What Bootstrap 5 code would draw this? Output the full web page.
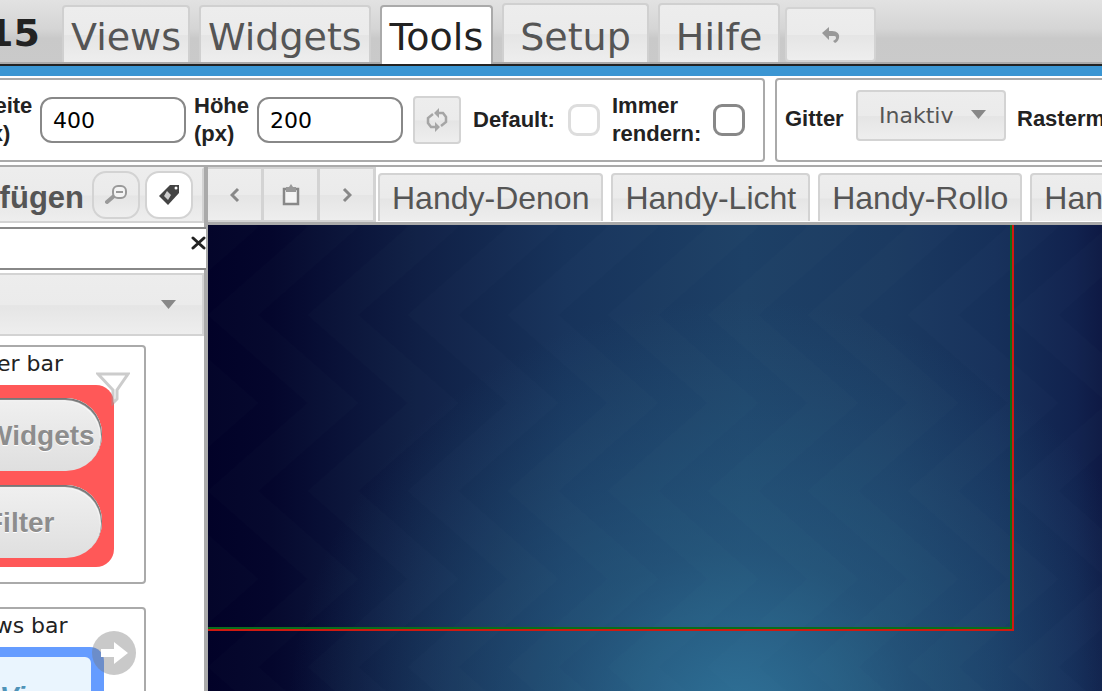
<!DOCTYPE html>
<html lang="de">
<head>
<meta charset="utf-8">
<meta name="viewport" content="width=device-width, initial-scale=1">
<title>Editor</title>
<link href="https://cdn.jsdelivr.net/npm/bootstrap@5.3.0/dist/css/bootstrap.min.css" rel="stylesheet">
<script src="https://cdn.jsdelivr.net/npm/bootstrap@5.3.0/dist/js/bootstrap.bundle.min.js"></script>
<style>
  :root { --face: linear-gradient(#ededed 0, #ebebeb 50%, #e5e5e5 52%, #eee 100%); --edge: #d3d3d3; --rule: #aaa; }
  body { font-family: "DejaVu Sans", Verdana, sans-serif; font-size: 22px; line-height: 28px; color: #222; background: #fff; }
  svg { display: block; }
  .face { background: var(--face); border: 2px solid var(--edge); border-radius: 4px; color: #555; padding: 0; }
  .arial { font-family: "Liberation Sans", Arial, sans-serif; }

  .topbar { height: 64px; background: linear-gradient(#e2e2e2 0, #d5d5d5 45%, #c9c9c9 60%, #cacaca 100%); box-shadow: inset 0 -2px #aaa; font-size: 38px; line-height: 48px; }
  .version { margin-left: -13px; width: 75px; padding-top: 2px; }
  .main-nav { gap: 9px; }
  .main-tab { color: #555; text-decoration: none; background: var(--face); border: 2px solid #d0d0d0; border-bottom: 0; border-radius: 4px 4px 0 0; padding: 6px 7px 1px; margin-bottom: 2px; }
  .main-tab.wide { padding: 8px 16px 1px; }
  .main-tab.active { background: #fff; border-color: var(--rule); color: #222; margin-bottom: 0; padding: 6px 8px 3px; }
  .undo { width: 91px; height: 55px; margin: 0 0 2px -4px; }
  .strip { height: 14px; background: #3b96d3; border-top: 2px solid #222; border-bottom: 2px solid #fff; }

  .tools { gap: 10px; border-bottom: 2px solid var(--rule); padding-bottom: 3px; }
  .group { border: 2px solid var(--rule); border-radius: 4px; height: 84px; font-weight: 700; }
  .group-size { border-left: 0; border-radius: 0 4px 4px 0; margin-left: -30px; width: 795px; }
  .group-grid { padding-left: 8px; }
  .size-label { width: 70px; }
  .size-label + .num + .size-label { width: 71px; padding-left: 8px; }
  .num { width: 146px; height: 46px; border: 2px solid #888; border-radius: 12px; padding: 0 11px; color: #000; background: #fff; font-family: "DejaVu Sans", Verdana, sans-serif; }
  .refresh { width: 48px; height: 48px; margin: 0 12px 0 10px; }
  .default-label { width: 95px; }
  .render-label { width: 113px; padding-left: 12px; }
  .tick { appearance: none; width: 32px; height: 32px; border: 3px solid #888; border-radius: 9px; background: #fff; margin: 0; }
  .tick:disabled { border-color: #ddd; }
  .grid-label { width: 71px; padding-top: 25px; }
  .raster-label { padding-top: 25px; }
  .pick-wrap { margin: 10px 11px 0 0; }
  .pick { appearance: none; width: 150px; height: 51px; padding: 0 21px; font-family: "DejaVu Sans", Verdana, sans-serif; }
  .caret { right: 20px; top: 20px; }

  .side { width: 208px; border-right: 4px solid var(--rule); }
  .side-head { height: 56px; border-width: 2px 2px 2px 0; border-radius: 0; border-top-color: #eee; font-size: 31px; font-weight: 700; gap: 5px; padding-right: 9px; }
  .side-title { padding-top: 6px; margin-right: 3px; }
  .round-btn { width: 48px; height: 48px; border-radius: 14px; }
  .round-btn.active { background: #fff; }
  .search { margin: 4px -2px 3px 0; height: 43px; border: solid #888; border-width: 2px 0; background: #fff; }
  .close-x { padding-top: 7px; }
  .combo { height: 63px; border-left: 0; border-radius: 0; padding-right: 26px; }
  .tile { margin: 9px 0 23px -118px; width: 264px; height: 239px; border: 2px solid var(--rule); border-radius: 4px; padding: 3px 30px 0; }
  .red-bar { margin-top: 7px; height: 182px; border-radius: 18px; background: #ff5858; padding: 13px 12px; gap: 14px; font-size: 28px; }
  .pill-btn { height: 73px; border-radius: 36px; border: 0; background: linear-gradient(#f0f0f0, #dfdfdf); box-shadow: inset -1px 2px 1px #777, inset -2px 3px 1px #fff; color: #8d8d8d; text-shadow: 0 1px #fff; font-weight: 700; padding: 2px 0 0 60px; }
  .blue-bar { margin: 7px 10px 0 0; height: 182px; border-radius: 14px 14px 0 0; background: #659cff; padding: 10px 13px; }
  .blue-inner { height: 100%; border-radius: 6px; background: #eaf5fe; color: #4f93b8; font-size: 28px; padding: 26px 13px; }
  .funnel { right: 14px; top: 25px; }
  .arrow { right: 8px; top: 22px; }

  .step { width: 56px; height: 55px; border-width: 2px 3px 2px 0; border-radius: 0; }
  .views { border-bottom: 3px solid var(--rule); height: 58px; }
  .view-tabs { padding: 0 0 1px 2px; gap: 8px; font-size: 32px; line-height: 36px; }
  .view-tab { border-bottom: 0; border-radius: 4px 4px 0 0; padding: 5px 12px; height: 48px; text-decoration: none; white-space: nowrap; }
  .stage { background:
      radial-gradient(ellipse 50% 90% at 59% 106%, rgba(48,118,156,.9) 0, rgba(44,105,142,.5) 40%, rgba(35,80,120,0) 100%),
      linear-gradient(90deg, #020228 0, #04062c 7%, #102046 24%, #17335b 40%, #1d4066 60%, #1b3a61 76%, #16305a 88%, #11224e 97%, #0e1944 100%); }
  .stage-frame { width: 806px; height: 406px; border: solid #d01a10; border-width: 0 2px 2px 0; }
  .stage-inner { border: solid #0a6e1c; border-width: 0 2px 2px 0; }
</style>
</head>
<body class="vh-100 overflow-hidden d-flex flex-column">

<header class="topbar d-flex align-items-end overflow-hidden flex-shrink-0">
  <strong class="version align-self-center">15</strong>
  <nav class="main-nav d-flex align-items-end">
    <a class="main-tab" href="#">Views</a>
    <a class="main-tab" href="#">Widgets</a>
    <a class="main-tab active" href="#" aria-current="page">Tools</a>
    <a class="main-tab wide" href="#">Setup</a>
    <a class="main-tab wide" href="#">Hilfe</a>
    <button class="face undo d-flex align-items-center justify-content-center" type="button" aria-label="Undo">
      <svg width="18" height="18" viewBox="0 0 18 18"><path d="M0 7 7 1v4h3c5 0 8 3 7 7-1 3-2 4-4 5l-2-2c2-1 3-2 3-3 0-2-1-2-3-2H7v4z" fill="#999"/></svg>
    </button>
  </nav>
</header>
<div class="strip flex-shrink-0"></div>

<section class="tools d-flex overflow-hidden flex-shrink-0">
  <div class="group group-size arial d-flex align-items-center flex-shrink-0">
    <label for="w" class="size-label">Breite<br>(px)</label>
    <input id="w" class="num" type="text" value="400">
    <label for="h" class="size-label">Höhe<br>(px)</label>
    <input id="h" class="num" type="text" value="200">
    <button class="face refresh d-flex align-items-center justify-content-center" type="button" aria-label="Refresh">
      <svg width="22" height="24" viewBox="0 0 22 24" fill="none" stroke="#a5a5a5" stroke-width="2.500"><path d="M7 6 2 10v5l3 4h5M12 5h5l3 4v5l-5 4"/><path d="m13 0-5 5 5 5zM9 14l5 5-5 5z" fill="#a5a5a5" stroke="none"/></svg>
    </button>
    <label for="d" class="default-label">Default:</label>
    <input id="d" class="tick" type="checkbox" disabled>
    <label for="r" class="render-label">Immer<br>rendern:</label>
    <input id="r" class="tick" type="checkbox">
  </div>
  <div class="group group-grid arial d-flex flex-shrink-0">
    <label for="g" class="grid-label">Gitter</label>
    <div class="pick-wrap position-relative">
      <select id="g" class="face pick"><option>Inaktiv</option></select>
      <svg class="caret position-absolute pe-none" width="15" height="9" viewBox="0 0 15 9"><path d="M0 0h15L7.500 9z" fill="#888"/></svg>
    </div>
    <span class="raster-label text-nowrap">Rastermaß</span>
  </div>
</section>

<main class="d-flex flex-grow-1 overflow-hidden">
  <aside class="side flex-shrink-0">
    <div class="face side-head arial d-flex align-items-center justify-content-end">
      <span class="side-title">Hinzufügen</span>
      <button class="face round-btn d-flex align-items-center justify-content-center flex-shrink-0" type="button" aria-label="Suchen">
        <svg width="22" height="20" viewBox="0 0 22 20"><path d="m9 11-7 6" stroke="#999" stroke-width="4" stroke-linecap="round"/><rect x="8" y="1" width="13" height="12" rx="5" fill="#f4f4f4" stroke="#999" stroke-width="2"/><path d="M11 7h7" stroke="#999" stroke-width="2"/></svg>
      </button>
      <button class="face round-btn active d-flex align-items-center justify-content-center flex-shrink-0" type="button" aria-label="Filter">
        <svg width="22" height="22" viewBox="0 0 22 22"><path d="M1 12 12 1h9v8L10 21z" fill="#444"/><path d="m9 7 4 4-3 5-4-4z" fill="#ccc"/><circle cx="18" cy="4" r="1.500" fill="#fff"/></svg>
      </button>
    </div>
    <div class="search d-flex justify-content-end">
      <button class="close-x border-0 bg-transparent px-0 pb-0 align-self-start" type="button" aria-label="Schließen">
        <svg width="15" height="14" viewBox="0 0 15 14"><path d="m2 2 11 10M13 2 2 12" stroke="#222" stroke-width="3" stroke-linecap="round"/></svg>
      </button>
    </div>
    <button class="face combo w-100 d-flex align-items-center justify-content-end" type="button" aria-label="Alle">
      <svg width="15" height="9" viewBox="0 0 15 9"><path d="M0 0h15L7.500 9z" fill="#888"/></svg>
    </button>
    <div class="tile position-relative">
      <div class="text-center">Filter bar</div>
      <div class="red-bar arial d-flex flex-column">
        <button class="pill-btn text-start flex-shrink-0" type="button">Widgets</button>
        <button class="pill-btn text-start flex-shrink-0" type="button">Filter</button>
      </div>
      <svg class="funnel position-absolute" width="34" height="34" viewBox="0 0 34 34"><path d="M2 2h30L21 18v9l-4 4V18z" fill="#fff" fill-opacity=".5" stroke="#999" stroke-opacity=".5" stroke-width="3"/></svg>
    </div>
    <div class="tile position-relative">
      <div class="text-center">Views bar</div>
      <div class="blue-bar arial fw-bold fst-italic text-end"><div class="blue-inner">Views</div></div>
      <svg class="arrow position-absolute" width="44" height="44" viewBox="0 0 44 44"><circle cx="22" cy="22" r="22" fill="#777" fill-opacity=".4"/><path d="M9 18h13v-7l14 11-14 11v-7H9z" fill="#fff"/></svg>
    </div>
  </aside>

  <section class="flex-grow-1 d-flex flex-column overflow-hidden">
    <div class="views d-flex flex-shrink-0">
      <button class="face step d-flex align-items-center justify-content-center flex-shrink-0" type="button" aria-label="Zurück">
        <svg width="10" height="16" viewBox="0 0 10 16"><path d="M8 2 2 8l6 6" fill="none" stroke="#888" stroke-width="3"/></svg>
      </button>
      <button class="face step d-flex align-items-center justify-content-center flex-shrink-0" type="button" aria-label="Liste">
        <svg width="18" height="22" viewBox="0 0 18 22"><path d="M2 5h14v15H2z" fill="#f4f4f4" stroke="#888" stroke-width="2.500"/><path d="M4 3h3l2-3 2 3h3v5H4z" fill="#999"/></svg>
      </button>
      <button class="face step d-flex align-items-center justify-content-center flex-shrink-0" type="button" aria-label="Weiter">
        <svg width="10" height="16" viewBox="0 0 10 16"><path d="m2 2 6 6-6 6" fill="none" stroke="#888" stroke-width="3"/></svg>
      </button>
      <nav class="view-tabs arial d-flex align-items-end">
        <a class="face view-tab" href="#">Handy-Denon</a>
        <a class="face view-tab" href="#">Handy-Licht</a>
        <a class="face view-tab" href="#">Handy-Rollo</a>
        <a class="face view-tab" href="#">Handy</a>
      </nav>
    </div>
    <div class="stage flex-grow-1 position-relative">
      <svg class="position-absolute top-0 start-0" width="100%" height="100%">
        <defs>
          <pattern id="chevron" width="100" height="176" y="90" patternUnits="userSpaceOnUse">
            <path d="M-100 0h50L50 88-50 176h-50L0 88zM0 0h50L150 88 50 176H0L100 88z" fill="#6ab" fill-opacity=".015"/>
          </pattern>
        </defs>
        <rect width="100%" height="100%" fill="url(#chevron)"/>
      </svg>
      <div class="stage-frame position-relative"><div class="stage-inner h-100"></div></div>
    </div>
  </section>
</main>
</body>
</html>
